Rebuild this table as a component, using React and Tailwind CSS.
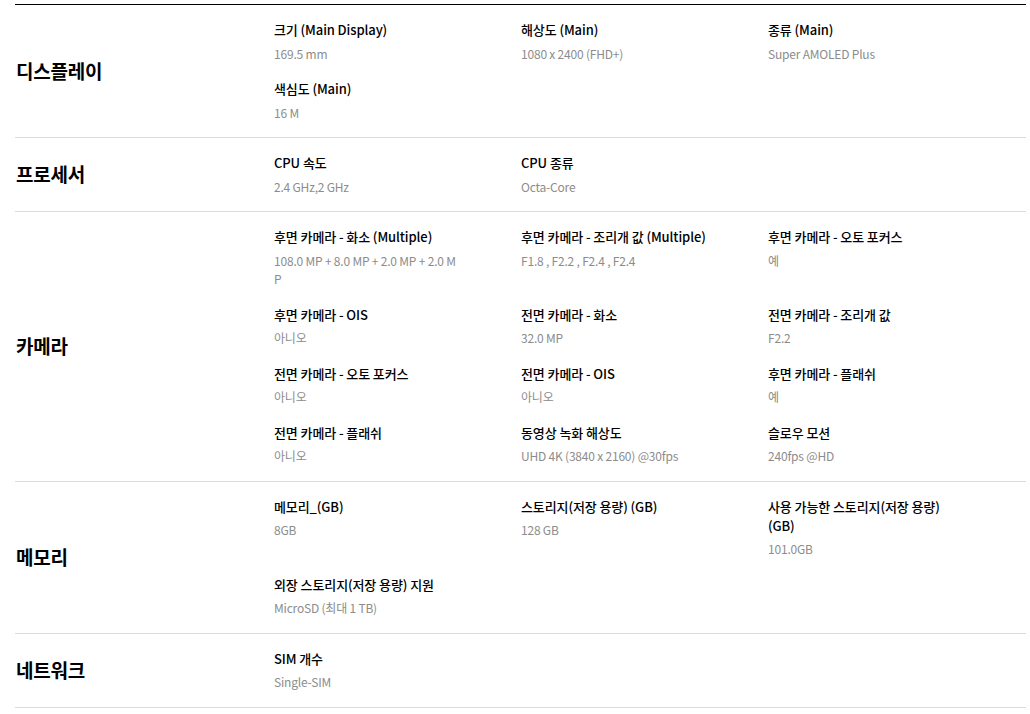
import React from "react";

const sections = [
  {
    name: "디스플레이",
    items: [
      { t: "크기 (Main Display)", v: "169.5 mm" },
      { t: "해상도 (Main)", v: "1080 x 2400 (FHD+)" },
      { t: "종류 (Main)", v: "Super AMOLED Plus" },
      { t: "색심도 (Main)", v: "16 M" },
    ],
  },
  {
    name: "프로세서",
    items: [
      { t: "CPU 속도", v: "2.4 GHz,2 GHz" },
      { t: "CPU 종류", v: "Octa-Core" },
    ],
  },
  {
    name: "카메라",
    items: [
      { t: "후면 카메라 - 화소 (Multiple)", v: ["108.0 MP + 8.0 MP + 2.0 MP + 2.0 M", "P"] },
      { t: "후면 카메라 - 조리개 값 (Multiple)", v: "F1.8 , F2.2 , F2.4 , F2.4" },
      { t: "후면 카메라 - 오토 포커스", v: "예" },
      { t: "후면 카메라 - OIS", v: "아니오" },
      { t: "전면 카메라 - 화소", v: "32.0 MP" },
      { t: "전면 카메라 - 조리개 값", v: "F2.2" },
      { t: "전면 카메라 - 오토 포커스", v: "아니오" },
      { t: "전면 카메라 - OIS", v: "아니오" },
      { t: "후면 카메라 - 플래쉬", v: "예" },
      { t: "전면 카메라 - 플래쉬", v: "아니오" },
      { t: "동영상 녹화 해상도", v: "UHD 4K (3840 x 2160) @30fps" },
      { t: "슬로우 모션", v: "240fps @HD" },
    ],
  },
  {
    name: "메모리",
    items: [
      { t: "메모리_(GB)", v: "8GB" },
      { t: "스토리지(저장 용량) (GB)", v: "128 GB" },
      { t: ["사용 가능한 스토리지(저장 용량)", "(GB)"], v: "101.0GB" },
      { t: "외장 스토리지(저장 용량) 지원", v: "MicroSD (최대 1 TB)" },
    ],
  },
  {
    name: "네트워크",
    items: [{ t: "SIM 개수", v: "Single-SIM" }],
  },
];

function Lines({ value }) {
  if (Array.isArray(value)) {
    return value.map((l, i) => (
      <React.Fragment key={i}>
        {i > 0 && <br />}
        {l}
      </React.Fragment>
    ));
  }
  return value;
}

export default function App() {
  return (
    <div
      className="w-[1030px] h-[714px] bg-white overflow-hidden pt-[4px]"
      style={{ fontFamily: '"Noto Sans CJK KR", "Noto Sans", sans-serif' }}
    >
      <div className="ml-[15px] w-[1011px] border-t border-black">
        {sections.map((s) => (
          <div key={s.name} className="flex border-b border-[#dcdcdc]">
            <div className="w-[259px] shrink-0 flex items-center pl-[1px]">
              <span className="text-[19px] font-bold text-black tracking-[-0.2px]">{s.name}</span>
            </div>
            <div className="grid grid-cols-[repeat(3,247px)] gap-y-[16px] pt-[15px] pb-[15px]">
              {s.items.map((it, i) => (
                <div key={i} className="pr-[30px]">
                  <div className="text-[13px] leading-[19px] font-medium text-black tracking-[-0.1px]">
                    <Lines value={it.t} />
                  </div>
                  <div className="mt-[5.5px] text-[12px] leading-[18.5px] text-[#8c8c8c] tracking-[-0.2px]">
                    <Lines value={it.v} />
                  </div>
                </div>
              ))}
            </div>
          </div>
        ))}
      </div>
    </div>
  );
}
